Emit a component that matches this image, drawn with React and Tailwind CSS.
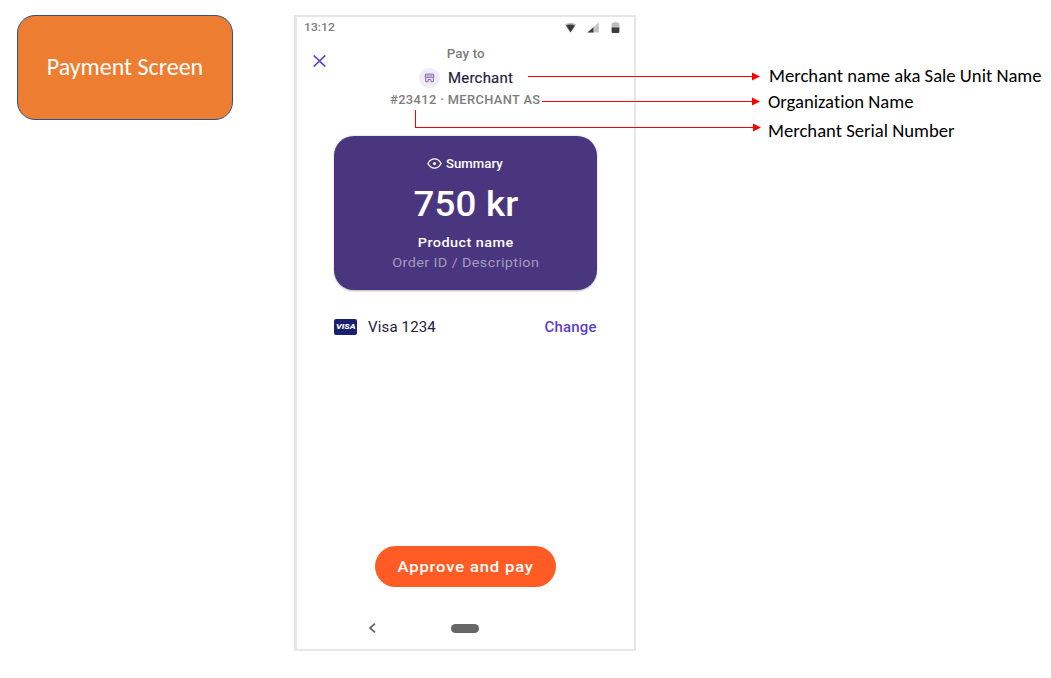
function StatusBar() {
  return (
    <div className="flex h-[21px] items-center justify-between pl-[7px] pr-[12px]">
      <span className="origin-left scale-x-[1.06] text-[11.5px] font-medium leading-[21px] text-[#7d7d7d]">13:12</span>
      <svg width="58" height="12" viewBox="0 0 58 12">
        <path d="M0.8 2.2Q6.5-0.8 12.2 2.2L6.5 10.4Z" fill="#bdbdbd" />
        <path d="M2 3.4Q6.5 1.6 11 3.4L6.5 10.4Z" fill="#3c3c3c" />
        <path d="M34.8 0.4V10.6H23.4Z" fill="#c4c4c4" />
        <path d="M29.4 5.2V10.6H23.4Z" fill="#3c3c3c" />
        <path d="M47.6 6V2Q47.6 1 48.8 1H49.5V0.2H53.5V1H54.2Q55.4 1 55.4 2V6Z" fill="#bdbdbd" />
        <path d="M47.6 5.6H55.4V10Q55.4 11 54.4 11H48.6Q47.6 11 47.6 10Z" fill="#3c3c3c" />
      </svg>
    </div>
  );
}

function StoreIcon() {
  return (
    <span className="flex h-[20px] w-[21px] items-center justify-center rounded-full bg-[#efecf4]">
      <svg width="11" height="10" viewBox="0 0 11 10" fill="none" stroke="#9160bd" strokeWidth="1">
        <path d="M1.5 1.1H9.5L9.9 4.3H1.1Z" />
        <path d="M1 2.7H10M4 1.1V4.3M7 1.1V4.3" strokeWidth="0.5" />
        <path d="M1.7 4.3V8.7H4.1V6.5H6.9V8.7H9.3V4.3" />
      </svg>
    </span>
  );
}

function Header() {
  return (
    <header className="relative flex h-[98px] flex-col items-center pt-[5px]">
      <svg className="absolute left-[16px] top-[17px]" width="13" height="12" viewBox="0 0 13 12" fill="none" stroke="#5b3fca" strokeWidth="1.7">
        <path d="M0.7 0.5L12.3 11.5M12.3 0.5L0.7 11.5" />
      </svg>
      <div className="h-[22px] scale-x-[1.07] text-[12.5px] font-medium leading-[22px] tracking-[0.1px] text-[#7d7d7d]">Pay to</div>
      <div className="mr-px flex h-[26px] items-center gap-[8px]">
        <StoreIcon />
        <span className="mr-[3px] origin-left scale-x-[1.07] text-[14px] leading-[24px] tracking-[0.2px] text-[#24203b] [-webkit-text-stroke:0.15px_#24203b]">Merchant</span>
      </div>
      <div className="h-[20px] scale-x-[1.07] text-[12px] font-medium leading-[19px] tracking-[0.35px] text-[#7d7d7d]">#23412 · MERCHANT AS</div>
    </header>
  );
}

function SummaryCard() {
  return (
    <section className="mx-auto flex h-[154px] w-[263px] flex-col items-center rounded-[20px] bg-[#4a367e] pt-[17px] text-white shadow-[0_0.5px_2px_rgba(0,0,0,0.3)]">
      <div className="flex h-[20px] items-center gap-[4px]">
        <svg width="15" height="11" viewBox="0 0 15 11" fill="none">
          <path d="M0.9 5.5Q3.4 0.9 7.5 0.9T14.1 5.5Q11.6 10.1 7.5 10.1T0.9 5.5Z" stroke="white" strokeWidth="1.3" />
          <circle cx="7.5" cy="5.5" r="1.6" fill="white" />
        </svg>
        <span className="mr-[3px] origin-left scale-x-[1.05] pt-px text-[12.5px] font-medium leading-[20px] tracking-[0.05px]">Summary</span>
      </div>
      <div className="h-[58px] scale-x-[1.05] text-[35px] font-medium leading-[63px] tracking-[0.15px]">750 kr</div>
      <div className="h-[20px] scale-x-[1.07] text-[13.5px] font-medium leading-[22px] tracking-[0.4px]">Product name</div>
      <div className="h-[20px] scale-x-[1.07] text-[13.5px] leading-[23px] tracking-[0.36px] text-[#a39ac0]">Order ID / Description</div>
    </section>
  );
}

function PaymentMethod() {
  return (
    <div className="mx-auto mt-[27px] flex h-[20px] w-[263px] items-center">
      <span className="flex h-[16px] w-[23px] items-center justify-center rounded-[2px] bg-[#1b1f70] text-white">
        <span className="scale-x-[1.12] text-[8px] font-extrabold italic leading-[16px]">VISA</span>
      </span>
      <span className="ml-[11px] origin-left scale-x-[1.07] text-[14px] leading-[21px] tracking-[0.15px] text-[#24203b]">Visa 1234</span>
      <span className="ml-auto origin-right scale-x-[1.07] text-[14px] font-medium leading-[21px] tracking-[0.15px] text-[#5b3fca]">Change</span>
    </div>
  );
}

function Phone() {
  return (
    <main className="ml-[61px] flex h-[636px] w-[342px] flex-none flex-col border-2 border-l-3 border-[#e6e6e6] bg-white font-['Roboto',sans-serif]">
      <StatusBar />
      <Header />
      <SummaryCard />
      <PaymentMethod />
      <button className="mx-auto mt-[209.4px] flex h-[41px] w-[181px] flex-none items-center justify-center rounded-full bg-[#ff5b24] text-white">
        <span className="scale-x-[1.07] text-[15.5px] font-medium leading-[40px] tracking-[0.8px]">Approve and pay</span>
      </button>
      <nav className="mt-[36px] flex h-[10px] items-center pl-[71px]">
        <svg width="8" height="10" viewBox="0 0 8 10" fill="none" stroke="#626262" strokeWidth="1.7">
          <path d="M7 0.6L2 5L7 9.4" />
        </svg>
        <span className="ml-[75px] h-[9px] w-[28px] rounded-full bg-[#666]" />
      </nav>
    </main>
  );
}

function Arrows() {
  return (
    <svg className="pointer-events-none absolute left-0 top-0" width="1051" height="678" viewBox="0 0 1051 678">
      <path d="M528 76H753V77H528ZM542 101H753V102H542ZM415 110H416V127H754V128H415Z" fill="#ff0000" />
      <path d="M752 72.5L760 76.5L752 80.5ZM752 97.5L760 101.5L752 105.5ZM753 123.5L761 127.5L753 131.5Z" fill="#ff0000" />
    </svg>
  );
}

export default function App() {
  return (
    <div className="relative flex h-[678px] w-[1051px] items-start overflow-hidden bg-white pl-[17px] pt-[15px]">
      <div className="flex h-[105px] w-[216px] flex-none items-center justify-center rounded-[18px] border border-[#2f528f] bg-[#ed7d31] pb-[2px] font-['Carlito','Lato',sans-serif] text-[24px] text-white">
        Payment Screen
      </div>
      <Phone />
      <div className="ml-[132px] flex flex-none flex-col whitespace-nowrap pt-[49px] font-['Carlito','Lato',sans-serif] text-[18.67px] text-black [font-variant-ligatures:none]">
        <span className="ml-px h-[26px] leading-[24px]">Merchant name aka Sale Unit Name</span>
        <span className="h-[28px] leading-[24px]">Organization Name</span>
        <span className="h-[26px] leading-[26px]">Merchant Serial Number</span>
      </div>
      <Arrows />
    </div>
  );
}
